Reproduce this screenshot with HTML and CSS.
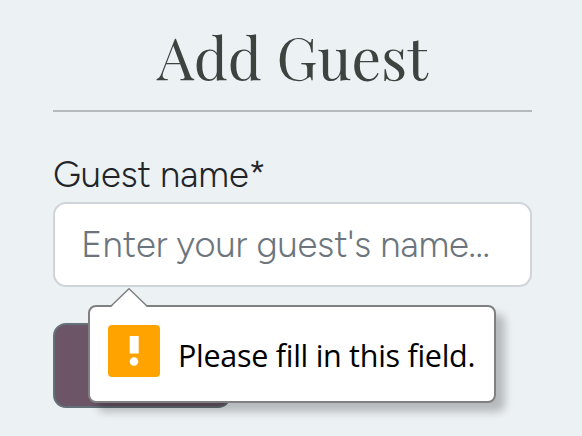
FILE: index.html
```html
<!DOCTYPE html>
<html lang="en">
<head>
<meta charset="utf-8">
<title>Add Guest</title>
<link rel="stylesheet" href="styles.css">
</head>
<body>
<main class="page">
  <h1 class="title">Add Guest</h1>
  <form class="form">
    <label class="label" for="guest">Guest name*</label>
    <div class="field">
      <input class="input" id="guest" type="text" placeholder="Enter your guest's name...">
      <div class="tooltip" role="alert">
        <svg class="arrow" width="38" height="20" viewBox="0 0 38 20"><path d="M0 20 L1 19 L19 1 L37 19 L38 20Z" fill="#fff"/><path d="M0.5 18.5 L19 0.8 L37.5 18.5" fill="none" stroke="#808080" stroke-width="1.5"/></svg>
        <svg class="icon" width="52" height="52" viewBox="0 0 52 52"><rect width="52" height="52" rx="4" fill="#ffa300"/><rect x="21.7" y="11" width="9" height="17.5" fill="#fff"/><circle cx="26" cy="36.5" r="4.3" fill="#fff"/></svg>
        <span class="message">Please fill in this field.</span>
      </div>
    </div>
    <button class="submit" type="button" aria-label="Submit"></button>
  </form>
</main>
</body>
</html>
```
FILE: styles.css
```css
* { box-sizing: border-box; }
body { margin: 0; background: #ecf1f4; overflow: hidden; }
.page { width: 479px; height: 436px; margin-left: 53px; }
.title {
  height: 112px;
  margin: 0;
  padding-top: 18px;
  border-bottom: 2px solid #b5bbbd;
  color: #3d433f;
  font: 400 58.5px/76px "Playfair Display", "Liberation Serif", serif;
  text-align: center;
  white-space: nowrap;
}
.form { display: flex; flex-direction: column; align-items: flex-start; padding-top: 38px; }
.label { height: 52px; color: #212529; font: 300 36.3px/50px Figtree, Inter, sans-serif; white-space: nowrap; }
.field { position: relative; width: 100%; }
.input {
  display: block;
  width: 100%;
  height: 85px;
  padding: 0 26px;
  border: 2px solid #ced4da;
  border-radius: 13px;
  background: #fff;
  font: 300 36.3px/50px Figtree, Inter, sans-serif;
}
.input::placeholder { color: #6c757d; opacity: 1; }
.submit {
  width: 178px;
  height: 85px;
  margin-top: 36px;
  border: 2px solid #647178;
  border-radius: 13px;
  background: #6b5567;
}
.tooltip {
  position: absolute;
  z-index: 1;
  top: 103px;
  left: 35px;
  display: flex;
  width: 408px;
  height: 98px;
  padding: 18px 0 0 18px;
  border: 2px solid #808080;
  border-radius: 8px;
  background: #fff;
  box-shadow: 9px 9px 9px rgba(0, 0, 0, .23);
}
.arrow { position: absolute; top: -19px; left: 20px; }
.icon { flex: none; }
.message { margin-left: 18px; color: #000; font: 400 30.5px/60px "Segoe UI", "Open Sans", sans-serif; letter-spacing: -.28px; white-space: nowrap; }
```
